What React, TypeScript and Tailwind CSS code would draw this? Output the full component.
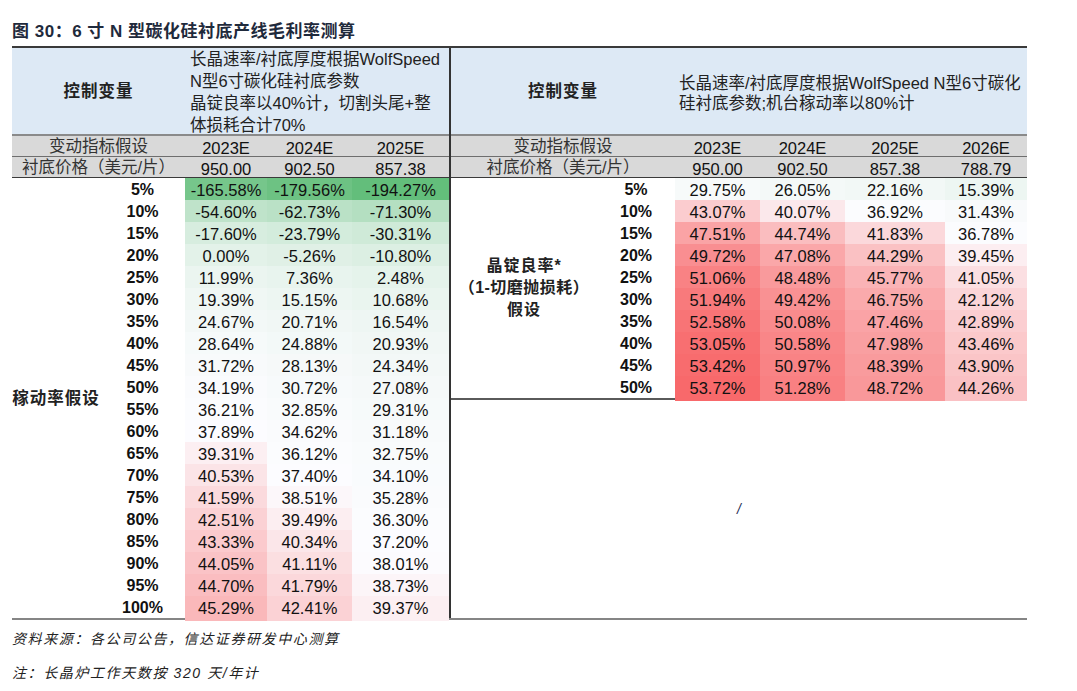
import React from 'react';

const leftYears = ['2023E', '2024E', '2025E'];
const leftPrices = ['950.00', '902.50', '857.38'];
const rightYears = ['2023E', '2024E', '2025E', '2026E'];
const rightPrices = ['950.00', '902.50', '857.38', '788.79'];

// 稼动率假设 -> 2023E / 2024E / 2025E
const utilRows: [string, number[]][] = [
  ['5%', [-165.58, -179.56, -194.27]],
  ['10%', [-54.6, -62.73, -71.3]],
  ['15%', [-17.6, -23.79, -30.31]],
  ['20%', [0, -5.26, -10.8]],
  ['25%', [11.99, 7.36, 2.48]],
  ['30%', [19.39, 15.15, 10.68]],
  ['35%', [24.67, 20.71, 16.54]],
  ['40%', [28.64, 24.88, 20.93]],
  ['45%', [31.72, 28.13, 24.34]],
  ['50%', [34.19, 30.72, 27.08]],
  ['55%', [36.21, 32.85, 29.31]],
  ['60%', [37.89, 34.62, 31.18]],
  ['65%', [39.31, 36.12, 32.75]],
  ['70%', [40.53, 37.4, 34.1]],
  ['75%', [41.59, 38.51, 35.28]],
  ['80%', [42.51, 39.49, 36.3]],
  ['85%', [43.33, 40.34, 37.2]],
  ['90%', [44.05, 41.11, 38.01]],
  ['95%', [44.7, 41.79, 38.73]],
  ['100%', [45.29, 42.41, 39.37]],
];

// 晶锭良率假设 -> 2023E..2026E
const yieldRows: [string, number[]][] = [
  ['5%', [29.75, 26.05, 22.16, 15.39]],
  ['10%', [43.07, 40.07, 36.92, 31.43]],
  ['15%', [47.51, 44.74, 41.83, 36.78]],
  ['20%', [49.72, 47.08, 44.29, 39.45]],
  ['25%', [51.06, 48.48, 45.77, 41.05]],
  ['30%', [51.94, 49.42, 46.75, 42.12]],
  ['35%', [52.58, 50.08, 47.46, 42.89]],
  ['40%', [53.05, 50.58, 47.98, 43.46]],
  ['45%', [53.42, 50.97, 48.39, 43.9]],
  ['50%', [53.72, 51.28, 48.72, 44.26]],
];

// excel-style 3 colour scale over both tables (min green, median white, max red)
const allValues = [...utilRows, ...yieldRows].flatMap(([, v]) => v).sort((a, b) => a - b);
const MIN = allValues[0];
const MAX = allValues[allValues.length - 1];
const half = allValues.length / 2;
const MID = allValues.length % 2 ? allValues[Math.floor(half)] : (allValues[half - 1] + allValues[half]) / 2;

const WHITE = [252, 252, 255];
const GREEN = [99, 190, 123];
const RED = [248, 105, 107];

function heat(v: number) {
  const mix = (to: number[], t: number) =>
    `rgb(${WHITE.map((c, i) => Math.round(c + (to[i] - c) * t)).join(',')})`;
  if (v <= MID) return mix(GREEN, (MID - v) / (MID - MIN));
  return mix(RED, (v - MID) / (MAX - MID));
}

const fmt = (v: number) => `${v.toFixed(2)}%`;

function GrayRow({ label, cells, labelW, cols, last }: { label: string; cells: string[]; labelW: string; cols: string; last?: boolean }) {
  return (
    <div className={`flex h-[21px] bg-[#d9d9d9] border-b ${last ? 'border-[#3a3a3a]' : 'border-[#6e6e6e]'}`}>
      <div className={`${labelW} flex items-center justify-center text-[#333]`}>{label}</div>
      <div className={`flex-1 grid ${cols}`}>
        {cells.map((c) => (
          <div key={c} className="flex items-center justify-center">{c}</div>
        ))}
      </div>
    </div>
  );
}

function LeftTable() {
  return (
    <div className="w-[437px] flex flex-col">
      <div className="h-[88px] flex bg-[#dde9f5] border-b-2 border-[#8a8a8a]">
        <div className="w-[173px] flex items-center justify-center font-bold tracking-[1px] text-[#222]">控制变量</div>
        <div className="flex-1 pl-[5px] leading-[22px] whitespace-nowrap text-[#222]">
          长晶速率/衬底厚度根据WolfSpeed
          <br />N型6寸碳化硅衬底参数
          <br />晶锭良率以40%计，切割头尾+整
          <br />体损耗合计70%
        </div>
      </div>
      <GrayRow label="变动指标假设" cells={leftYears} labelW="w-[173px]" cols="grid-cols-[82px_85px_97px]" />
      <GrayRow label="衬底价格（美元/片）" cells={leftPrices} labelW="w-[173px]" cols="grid-cols-[82px_85px_97px]" last />
      <div className="h-[440px] flex">
        <div className="w-[88px] flex items-center justify-center font-bold tracking-[1px] text-[#222]">稼动率假设</div>
        <div className="flex-1 flex flex-col">
          {utilRows.map(([label, vals]) => (
            <div key={label} className="h-[22px] grid grid-cols-[85px_82px_85px_97px]">
              <div className="flex items-center justify-center font-bold text-[16px]">{label}</div>
              {vals.map((v, i) => (
                <div key={i} className="flex items-center justify-center" style={{ backgroundColor: heat(v) }}>
                  {fmt(v)}
                </div>
              ))}
            </div>
          ))}
        </div>
      </div>
    </div>
  );
}

function RightTable() {
  return (
    <div className="w-[578px] flex flex-col border-l-2 border-[#333]">
      <div className="h-[88px] flex bg-[#dde9f5] border-b-2 border-[#8a8a8a]">
        <div className="w-[224px] flex items-center justify-center font-bold tracking-[1px] text-[#222]">控制变量</div>
        <div className="flex-1 pl-[4px] pt-[4px] flex flex-col justify-center leading-[20px] whitespace-nowrap text-[#222]">
          <span>长晶速率/衬底厚度根据WolfSpeed N型6寸碳化</span>
          <span>硅衬底参数;机台稼动率以80%计</span>
        </div>
      </div>
      <GrayRow label="变动指标假设" cells={rightYears} labelW="w-[224px]" cols="grid-cols-[85px_85px_100px_82px]" />
      <GrayRow label="衬底价格（美元/片）" cells={rightPrices} labelW="w-[224px]" cols="grid-cols-[85px_85px_100px_82px]" last />
      <div className="h-[440px] flex flex-col">
        <div className="h-[222px] flex border-b-2 border-[#5a5a5a]">
          <div className="w-[146px] flex flex-col items-center justify-center font-bold text-[16px] leading-[22px] text-[#222]">
            <span className="tracking-[1px]">晶锭良率*</span>
            <span className="tracking-[0.5px]">（1-切磨抛损耗）</span>
            <span className="tracking-[1px]">假设</span>
          </div>
          <div className="flex-1 flex flex-col">
            {yieldRows.map(([label, vals]) => (
              <div key={label} className="h-[22px] grid grid-cols-[78px_85px_85px_100px_82px]">
                <div className="flex items-center justify-center font-bold text-[16px]">{label}</div>
                {vals.map((v, i) => (
                  <div key={i} className="flex items-center justify-center" style={{ backgroundColor: heat(v) }}>
                    {fmt(v)}
                  </div>
                ))}
              </div>
            ))}
          </div>
        </div>
        <div className="flex-1 flex items-center justify-center text-[14px] italic text-[#1f2f55]">/</div>
      </div>
    </div>
  );
}

export default function App() {
  return (
    <div className="w-[1077px] h-[691px] overflow-hidden bg-white text-[#111] text-[16.5px] font-['Liberation_Sans','Noto_Sans_CJK_SC',sans-serif]">
      <div className="h-[46px] pt-[20px] pl-[12px] text-[17px] leading-[24px] font-bold tracking-[0.5px] text-[#1f2a3c]">
        图 30：6 寸 N 型碳化硅衬底产线毛利率测算
      </div>
      <div className="ml-[12px] w-[1015px] flex border-t-2 border-t-[#3a3a3a] border-b-2 border-b-[#858585]">
        <LeftTable />
        <RightTable />
      </div>
      <div className="pl-[12px] italic text-[14px] leading-[20px] tracking-[1.6px] text-[#222]">
        <p className="mt-[9px]">资料来源：各公司公告，信达证券研发中心测算</p>
        <p className="mt-[14px]">注：长晶炉工作天数按 320 天/年计</p>
      </div>
    </div>
  );
}
